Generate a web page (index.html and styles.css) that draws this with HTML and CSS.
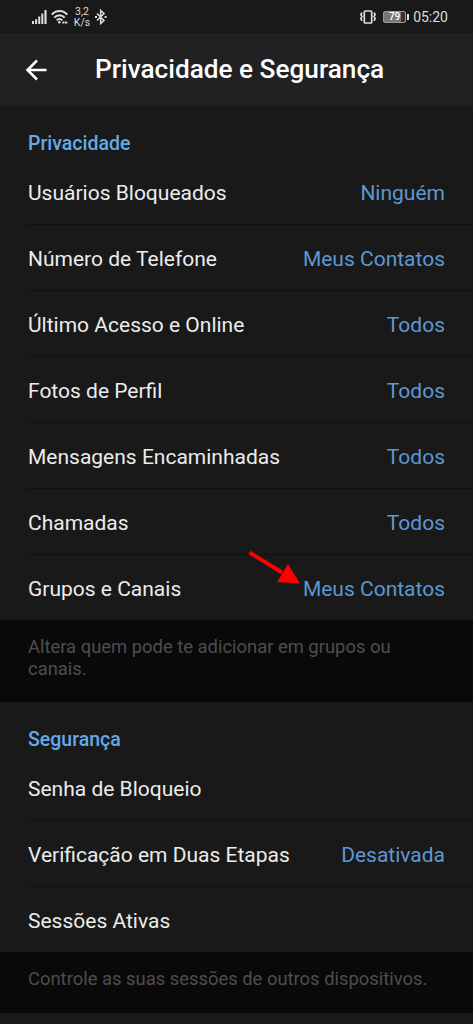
FILE: index.html
```html
<!DOCTYPE html>
<html lang="pt-BR">
<head>
<meta charset="utf-8">
<meta name="viewport" content="width=device-width, initial-scale=1">
<title>Privacidade e Segurança</title>
<link rel="stylesheet" href="styles.css">
</head>
<body>
<div class="statusbar">
  <svg class="signal" width="15" height="14" viewBox="0 0 15 14" fill="#ddd"><path d="M0 11h2v3H0zM3.1 9.200h2V14h-2zM6.200 6.500h2V14h-2zM9.300 3.500h2V14h-2zM12.400 0h2.200v14h-2.200z"/></svg>
  <svg class="wifi" width="17" height="14" viewBox="0 0 17 14" fill="none" stroke="#ddd" stroke-width="1.900"><path d="M.7 4.700C5-.2 12-.2 16.300 4.700M3.300 7.700c3-3.200 7.400-3.200 10.400 0M5.700 10.300c1.800-1.700 3.800-1.700 5.600 0"/><circle cx="8.300" cy="12.300" r="1.300" fill="#ddd" stroke="none"/><path d="M11.300 12.500h5" stroke-width="2.200" stroke-dasharray="2.200 .6"/></svg>
  <div class="speed"><span>3,2</span><span>K/s</span></div>
  <svg class="bluetooth" width="12" height="16" viewBox="0 0 12 16" fill="none" stroke="#ddd" stroke-width="1.500"><path d="M2 4.500l7 7L5.700 14.500v-13L9 4.500l-7 7"/><path d="M0 8h2M9.600 8h2" stroke-width="1.800"/></svg>
  <span class="spacer"></span>
  <svg class="vibrate" width="18" height="14" viewBox="0 0 18 14" fill="none" stroke="#ddd"><rect x="5.300" y="1" width="7.400" height="12" rx="1" stroke-width="1.700"/><path d="M3 2.500L1.800 4.500 3 6.500 1.800 8.500 3 11M15 2.500l1.200 2-1.200 2 1.200 2-1.200 2.500" stroke-width="1.600"/></svg>
  <div class="battery">79</div>
  <span class="time">05:20</span>
</div>
<header class="header">
  <svg class="back" width="22" height="22" viewBox="0 0 22 22" fill="none" stroke="#fff" stroke-width="2.500"><path d="M21.500 11H2.500M12 1.500L2.500 11l9.500 9.500"/></svg>
  <h1 class="title">Privacidade e Segurança</h1>
</header>
<main>
  <section class="section">
    <h2 class="heading">Privacidade</h2>
    <div class="row"><span>Usuários Bloqueados</span><span class="value">Ninguém</span></div>
    <div class="row"><span>Número de Telefone</span><span class="value">Meus Contatos</span></div>
    <div class="row"><span>Último Acesso e Online</span><span class="value">Todos</span></div>
    <div class="row"><span>Fotos de Perfil</span><span class="value">Todos</span></div>
    <div class="row"><span>Mensagens Encaminhadas</span><span class="value">Todos</span></div>
    <div class="row"><span>Chamadas</span><span class="value">Todos</span></div>
    <div class="row last"><span>Grupos e Canais</span><span class="value">Meus Contatos</span>
      <svg class="pointer" width="54" height="36" viewBox="0 0 54 36"><path d="M1.500 2.500L34 22.500" stroke="#f00" stroke-width="4"/><path d="M52 33.500L29 32 40 14z" fill="#f00"/></svg>
    </div>
  </section>
  <p class="note">Altera quem pode te adicionar em grupos ou canais.</p>
  <section class="section">
    <h2 class="heading security">Segurança</h2>
    <div class="row"><span>Senha de Bloqueio</span></div>
    <div class="row"><span>Verificação em Duas Etapas</span><span class="value">Desativada</span></div>
    <div class="row last"><span>Sessões Ativas</span></div>
  </section>
  <p class="note short">Controle as suas sessões de outros dispositivos.</p>
</main>
</body>
</html>
```
FILE: styles.css
```css
* { box-sizing: border-box; }
body {
  margin: 0;
  height: 1024px;
  overflow: hidden;
  background: #191919;
  color: #ececec;
  font-family: Roboto, "Liberation Sans", sans-serif;
}
.statusbar {
  display: flex;
  align-items: center;
  height: 33px;
  padding: 0 25px 0 32px;
  color: #ddd;
}
.signal { margin-right: 4px; }
.speed {
  display: flex;
  flex-direction: column;
  align-items: center;
  width: 18px;
  margin: 0 4px 0 5px;
  font-size: 10.500px;
  line-height: 11px;
}
.spacer { flex: 1; }
.vibrate { margin-right: 6px; }
.battery {
  position: relative;
  width: 23px;
  height: 12px;
  margin-right: 7px;
  border: 1px solid #999;
  border-radius: 2px;
  background: linear-gradient(to right, #777 79%, #333 79%);
  color: #fff;
  font-size: 10px;
  font-weight: 500;
  line-height: 10px;
  text-align: center;
}
.battery::after {
  content: "";
  position: absolute;
  top: 2px;
  right: -4px;
  width: 2px;
  height: 6px;
  background: #ddd;
}
.time { margin-top: 1px; font-size: 14px; line-height: 16px; }
.header {
  display: flex;
  align-items: center;
  height: 73px;
  padding-left: 25px;
  background: #212124;
}
.title {
  margin: 0 0 2px 48px;
  color: #fff;
  font-size: 26.200px;
  font-weight: 500;
  line-height: 30px;
  white-space: nowrap;
}
main { padding-top: 1px; }
.heading {
  height: 52px;
  margin: 0;
  padding: 25px 28px 0;
  color: #66a9e9;
  font-size: 19.500px;
  font-weight: 500;
  line-height: 24px;
}
.security { height: 53px; padding-top: 26px; }
.row {
  position: relative;
  display: flex;
  align-items: center;
  justify-content: space-between;
  height: 66px;
  margin-left: 27px;
  padding: 2px 28px 0 1px;
  border-bottom: 1px solid #101010;
  font-size: 21px;
  line-height: 26px;
  white-space: nowrap;
}
.last { height: 65px; border-bottom: 0; }
.value { color: #5c98d2; }
.pointer { position: absolute; left: 221px; top: -5px; }
.note {
  height: 82px;
  margin: 0;
  padding: 16px 40px 0 28px;
  background: #090909;
  color: #4e4e4e;
  font-size: 18.400px;
  line-height: 22px;
}
.short { height: 61px; padding-right: 20px; white-space: nowrap; }
```
